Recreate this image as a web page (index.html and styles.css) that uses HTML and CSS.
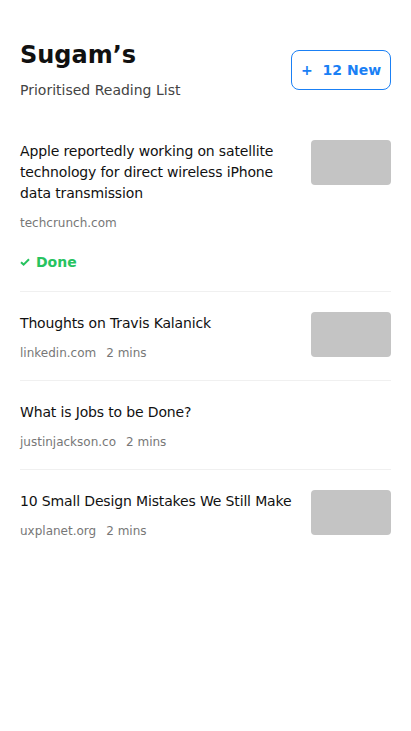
FILE: index.html
```html
<!DOCTYPE html>
<html>
<head>
<meta charset="utf-8">
<link rel="stylesheet" href="styles.css">
</head>
<body>
<div class="page">
  <header class="header">
    <div class="heading">
      <h1 class="title">Sugam’s</h1>
      <p class="subtitle">Prioritised Reading List</p>
    </div>
    <button class="new-btn"><span class="plus">+</span><span>12 New</span></button>
  </header>
  <ul class="list">
    <li class="item">
      <div class="item-body">
        <div class="item-title">Apple reportedly working on satellite technology for direct wireless iPhone data transmission</div>
        <div class="meta"><span>techcrunch.com</span></div>
        <div class="done"><svg class="check" width="10" height="8" viewBox="0 0 10 8"><path d="M1 4.2 L3.6 6.6 L9 1.2" fill="none" stroke="currentColor" stroke-width="2"/></svg><span>Done</span></div>
      </div>
      <div class="thumb"></div>
    </li>
    <li class="item">
      <div class="item-body">
        <div class="item-title">Thoughts on Travis Kalanick</div>
        <div class="meta"><span>linkedin.com</span><span>2 mins</span></div>
      </div>
      <div class="thumb"></div>
    </li>
    <li class="item">
      <div class="item-body">
        <div class="item-title">What is Jobs to be Done?</div>
        <div class="meta"><span>justinjackson.co</span><span>2 mins</span></div>
      </div>
    </li>
    <li class="item">
      <div class="item-body">
        <div class="item-title">10 Small Design Mistakes We Still Make</div>
        <div class="meta"><span>uxplanet.org</span><span>2 mins</span></div>
      </div>
      <div class="thumb"></div>
    </li>
  </ul>
</div>
</body>
</html>
```
FILE: styles.css
```css
* { box-sizing: border-box; }
html, body { margin: 0; padding: 0; background: #fff; }
body { font-family: "DejaVu Sans", sans-serif; color: #111; }
.page { padding: 40px 20px 0 20px; }
.header { display: flex; justify-content: space-between; align-items: flex-start; }
.title { margin: 0; font-size: 24px; line-height: 30px; font-weight: 600; color: #111; letter-spacing: 0; }
.subtitle { margin: 11px 0 0 0; font-size: 14px; line-height: 18px; color: #444; }
.new-btn {
  margin-top: 10px; width: 100px; height: 40px;
  border: 1px solid #1a80f5; border-radius: 8px; background: #fff;
  color: #1a80f5; font-family: inherit; font-weight: 700; font-size: 14px;
  display: flex; align-items: center; justify-content: center; gap: 10px; padding: 0;
}
.plus { font-weight: 600; }
.list { list-style: none; margin: 33px 0 0 0; padding: 0; }
.item { display: flex; justify-content: space-between; gap: 12px; padding: 21px 0 19px 0; border-bottom: 1px solid #f0f0f0; }
.item:first-child { padding-top: 9px; padding-bottom: 20px; }
.item:last-child { border-bottom: none; }
.item-body { flex: 1; }
.item-title { font-size: 14px; line-height: 21px; color: #111; letter-spacing: -0.15px; }
.item .thumb { margin-top: -1px; }
.meta { margin-top: 11px; font-size: 12px; line-height: 16px; color: #777; display: flex; gap: 10px; }
.done { margin-top: 22px; color: #27c35f; font-weight: 700; font-size: 14px; line-height: 18px; display: flex; align-items: center; gap: 6px; }
.thumb { width: 80px; height: 45px; border-radius: 4px; background: #c4c4c4; flex: none; }
```
